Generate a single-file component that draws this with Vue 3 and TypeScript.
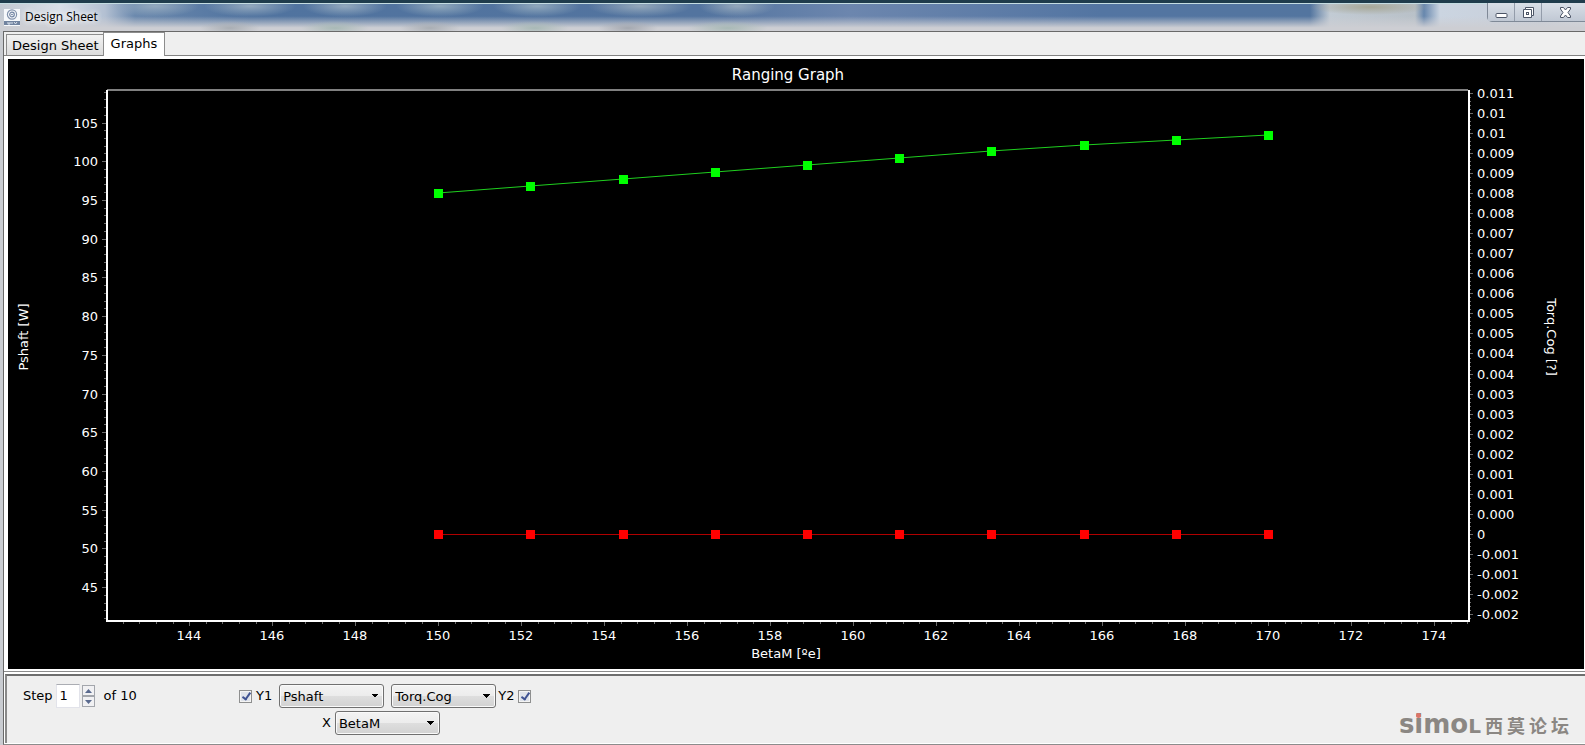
<script setup lang="ts">
import { computed, onBeforeUnmount, onMounted, ref } from 'vue'

interface Tick {
  pos: number
  label: string
}

const chartBox = ref<HTMLElement | null>(null)
const width = ref(1576)
const height = ref(610)
let observer: ResizeObserver | undefined

onMounted(() => {
  observer = new ResizeObserver((entries) => {
    const box = entries[0].contentRect
    width.value = Math.round(box.width)
    height.value = Math.round(box.height)
  })
  if (chartBox.value) observer.observe(chartBox.value)
})
onBeforeUnmount(() => observer?.disconnect())

const margin = { left: 99, right: 116, top: 31, bottom: 49 }
const right = computed(() => width.value - margin.right)
const bottom = computed(() => height.value - margin.bottom)
const middleX = computed(() => Math.round((margin.left + right.value) / 2))
const middleY = computed(() => Math.round((margin.top + bottom.value) / 2) - 18)

const xRange = [142.02, 174.82]
const yRange = [40.75, 109.2]
const y2Range = [-26.3, 0.15]

const scaleX = (v: number) =>
  Math.round(margin.left + ((v - xRange[0]) / (xRange[1] - xRange[0])) * (right.value - margin.left))
const scaleOn = (range: number[], v: number) =>
  Math.round(bottom.value - ((v - range[0]) / (range[1] - range[0])) * (bottom.value - margin.top))

const xTicks = computed<Tick[]>(() =>
  Array.from({ length: 16 }, (_, i) => ({ pos: scaleX(144 + i * 2), label: String(144 + i * 2) })),
)
const xMinor = computed(() => Array.from({ length: 82 }, (_, i) => scaleX(142.4 + i * 0.4)))

const yTicks = computed<Tick[]>(() =>
  Array.from({ length: 13 }, (_, i) => ({ pos: scaleOn(yRange, 105 - i * 5), label: String(105 - i * 5) })),
)
const yMinor = computed(() => Array.from({ length: 69 }, (_, i) => scaleOn(yRange, 41 + i)))

// The right axis is spaced in label steps, counted down from the top.
const y2Labels = [
  '0.011', '0.01', '0.01', '0.009', '0.009', '0.008', '0.008', '0.007', '0.007',
  '0.006', '0.006', '0.005', '0.005', '0.004', '0.004', '0.003', '0.003', '0.002',
  '0.002', '0.001', '0.001', '0.000', '0', '-0.001', '-0.001', '-0.002', '-0.002',
]
const y2Ticks = computed<Tick[]>(() => y2Labels.map((label, i) => ({ pos: scaleOn(y2Range, -i), label })))
const y2Minor = computed(() => Array.from({ length: 132 }, (_, i) => scaleOn(y2Range, -i / 5)))

const shaftPower = [95.9, 96.8, 97.7, 98.6, 99.5, 100.4, 101.3, 102.1, 102.75, 103.4]
const points = computed(() =>
  shaftPower.map((v, i) => ({ x: scaleX(150 + (i * 20) / 9), y: scaleOn(yRange, v) })),
)
const cogPoints = computed(() => points.value.map((p) => ({ x: p.x, y: scaleOn(y2Range, -22) })))
const toLine = (list: { x: number; y: number }[]) => list.map((p) => `${p.x},${p.y}`).join(' ')

const tab = ref('graphs')
const step = ref(1)
const showY1 = ref(true)
const showY2 = ref(true)
const y1Name = ref('Pshaft')
const y2Name = ref('Torq.Cog')
const xName = ref('BetaM')
const moveStep = (by: number) => {
  step.value = Math.min(10, Math.max(1, step.value + by))
}
</script>

<template>
  <div class="window">
    <header class="titlebar">
      <div class="glass" aria-hidden="true"></div>
      <svg class="app-icon" width="16" height="17" viewBox="0 0 16 17" aria-hidden="true">
        <rect width="16" height="17" fill="#f6f8fb" />
        <circle cx="8" cy="5.5" r="4.6" fill="none" stroke="#8393ad" stroke-width="1.2" />
        <circle cx="8" cy="5.5" r="2.3" fill="none" stroke="#7386a4" stroke-width="1.2" />
        <circle cx="8" cy="5.5" r="0.8" fill="#5e7396" />
        <rect y="12" width="16" height="4" fill="#71839f" />
        <path d="M4 13v2h2v-2M8 13v2M10 13l1.500 2 1.500-2" fill="none" stroke="#dfe6f0" />
      </svg>
      <h1>Design Sheet</h1>
      <div class="caption-buttons">
        <button type="button" class="cap" aria-label="Minimize">
          <svg width="13" height="15" viewBox="0 0 13 15">
            <rect x="1" y="8.500" width="11" height="4" rx="1" fill="#fff" stroke="#4c5566" />
          </svg>
        </button>
        <button type="button" class="cap" aria-label="Restore">
          <svg width="13" height="15" viewBox="0 0 13 15">
            <path d="M3.500 2.500h8v8h-2v2h-8v-8h2z" fill="#fff" stroke="#4c5566" />
            <path d="M3.500 4.500h6v6" fill="none" stroke="#4c5566" />
            <rect x="4.500" y="7.500" width="2" height="2" fill="#fff" stroke="#4c5566" />
          </svg>
        </button>
        <button type="button" class="cap close" aria-label="Close">
          <svg width="13" height="15" viewBox="0 0 13 15">
            <path
              d="M1.500 2.500h3l2 2.500 2-2.500h3v1.500l-2.500 3.500 2.500 3.500v1.500h-3l-2-2.500-2 2.500h-3v-1.500l2.500-3.500-2.500-3.500z"
              fill="#fff" stroke="#4c5566"
            />
          </svg>
        </button>
      </div>
    </header>

    <main class="client">
      <div class="tabs" role="tablist">
        <button type="button" role="tab" :aria-selected="tab === 'sheet'" :class="{ active: tab === 'sheet' }" @click="tab = 'sheet'">Design Sheet</button>
        <button type="button" role="tab" :aria-selected="tab === 'graphs'" :class="{ active: tab === 'graphs' }" @click="tab = 'graphs'">Graphs</button>
      </div>

      <section class="page">
        <div ref="chartBox" class="chart">
          <svg :width="width" :height="height" role="img" aria-label="Ranging Graph">
            <g class="ticks" shape-rendering="crispEdges">
              <line v-for="(p, i) in xMinor" :key="'xm' + i" :x1="p" :x2="p" :y1="bottom" :y2="bottom + 4" />
              <line v-for="t in xTicks" :key="'x' + t.label" :x1="t.pos" :x2="t.pos" :y1="bottom" :y2="bottom + 6" />
              <line v-for="(p, i) in yMinor" :key="'ym' + i" :x1="margin.left - 3" :x2="margin.left" :y1="p" :y2="p" />
              <line v-for="t in yTicks" :key="'y' + t.label" :x1="margin.left - 5" :x2="margin.left" :y1="t.pos" :y2="t.pos" />
              <line v-for="(p, i) in y2Minor" :key="'rm' + i" :x1="right" :x2="right + 3" :y1="p" :y2="p" />
              <line v-for="(t, i) in y2Ticks" :key="'r' + i" :x1="right" :x2="right + 5" :y1="t.pos" :y2="t.pos" />
            </g>
            <g shape-rendering="crispEdges" fill="none" stroke-width="2">
              <line :x1="margin.left" :x2="right" :y1="margin.top" :y2="margin.top" stroke="#808080" />
              <polyline
                :points="`${margin.left},${margin.top} ${margin.left},${bottom + 1} ${right + 1},${bottom + 1} ${right + 1},${margin.top}`"
                stroke="#fff"
              />
            </g>

            <text class="chart-title" :x="middleX" y="21" text-anchor="middle">Ranging Graph</text>
            <g class="labels">
              <text v-for="t in xTicks" :key="t.label" :x="t.pos" :y="bottom + 20" text-anchor="middle">{{ t.label }}</text>
              <text v-for="t in yTicks" :key="t.label" :x="margin.left - 9" :y="t.pos + 5" text-anchor="end">{{ t.label }}</text>
              <text v-for="(t, i) in y2Ticks" :key="i" :x="right + 9" :y="t.pos + 5">{{ t.label }}</text>
              <text :x="middleX - 2" :y="bottom + 38" text-anchor="middle">BetaM [ºe]</text>
              <text :transform="`translate(20 ${middleY}) rotate(-90)`" text-anchor="middle">Pshaft [W]</text>
              <text :transform="`translate(${width - 37} ${middleY}) rotate(90)`" text-anchor="middle">Torq.Cog [?]</text>
            </g>

            <polyline :points="toLine(points)" fill="none" stroke="#1fd01f" />
            <polyline :points="toLine(cogPoints)" fill="none" stroke="#b00000" shape-rendering="crispEdges" />
            <g fill="#00ff00">
              <rect v-for="(p, i) in points" :key="i" :x="p.x - 4" :y="p.y - 4" width="9" height="9" />
            </g>
            <g fill="#ff0000">
              <rect v-for="(p, i) in cogPoints" :key="i" :x="p.x - 4" :y="p.y - 4" width="9" height="9" />
            </g>
          </svg>
        </div>
      </section>

      <form class="controls" @submit.prevent>
        <div class="step">
          <label for="step">Step</label>
          <input id="step" v-model.number="step" type="text" />
          <span class="spin">
            <button type="button" aria-label="Next step" @click="moveStep(1)"><svg width="7" height="4"><path d="M0 4L3.500 0 7 4z" fill="#5a6a8e" /></svg></button>
            <button type="button" aria-label="Previous step" @click="moveStep(-1)"><svg width="7" height="4"><path d="M0 0h7L3.500 4z" fill="#5a6a8e" /></svg></button>
          </span>
          <span>of 10</span>
        </div>
        <div class="axes">
          <div class="row">
            <label class="tick">
              <input v-model="showY1" type="checkbox" />
              Y1
            </label>
            <select v-model="y1Name" aria-label="Y1 quantity"><option>Pshaft</option></select>
            <select v-model="y2Name" class="second" aria-label="Y2 quantity"><option>Torq.Cog</option></select>
            <label class="tick">
              Y2
              <input v-model="showY2" type="checkbox" />
            </label>
          </div>
          <div class="row x-row">
            <label for="x-name">X</label>
            <select id="x-name" v-model="xName"><option>BetaM</option></select>
          </div>
        </div>
        <div class="brand">
          <span class="latin">s<span class="dotted">i</span>mo<span class="cap-l">L</span></span>
          <span class="han"><span>西</span><span>莫</span><span>论</span><span>坛</span></span>
        </div>
      </form>
    </main>
  </div>
</template>

<style>
html,
body {
  margin: 0;
  background: #c9ccd1;
}
</style>

<style scoped>
.window {
  box-sizing: border-box;
  display: flex;
  flex-direction: column;
  height: 100vh;
  min-height: 400px;
  font-family: 'DejaVu Sans', Verdana, sans-serif;
  font-size: 13px;
  color: #000;
  overflow: hidden;
}

.titlebar {
  position: relative;
  box-sizing: border-box;
  display: flex;
  align-items: flex-start;
  height: 31px;
  flex: none;
  border-top: 3px solid #1f3c4c;
  background: #c9ced8;
  overflow: hidden;
}

.glass {
  position: absolute;
  inset: 0;
  border-top: 1px solid #c5dde2;
  background:
    radial-gradient(ellipse 30px 7px at 230px 24px, #a9aeb4, transparent),
    radial-gradient(ellipse 34px 7px at 335px 24px, #a8b9b6, transparent),
    radial-gradient(ellipse 30px 7px at 430px 24px, #a9aeb4, transparent),
    radial-gradient(ellipse 34px 7px at 535px 24px, #a8b9b6, transparent),
    radial-gradient(ellipse 30px 7px at 628px 24px, #a4a8b0, transparent),
    radial-gradient(ellipse 40px 7px at 728px 24px, #a8b9b6, transparent),
    linear-gradient(to bottom, transparent 45%, #cdced3 88%),
    radial-gradient(ellipse 44px 11px at 155px 2px, #93a9be, transparent),
    radial-gradient(ellipse 46px 11px at 250px 2px, #93a9be, transparent),
    radial-gradient(ellipse 42px 11px at 345px 2px, #93a9be, transparent),
    radial-gradient(ellipse 44px 11px at 440px 2px, #90a8bc, transparent),
    radial-gradient(ellipse 44px 11px at 537px 2px, #90a8bc, transparent),
    radial-gradient(ellipse 52px 11px at 640px 2px, #94a8bb, transparent),
    radial-gradient(ellipse 38px 11px at 737px 2px, #94a8bb, transparent),
    radial-gradient(ellipse 60px 8px at 1370px 3px, #a7a898, transparent),
    linear-gradient(to right, #c3c9d2 0, #d9dfe8 60px, #b3c0d2 105px, #6a88ad 135px, #50739f 250px, #53749f 700px, #6c86ae 850px, #5375a2 1100px, #53759f 1310px, #c2cbd4 1330px, #b9c1c8 1415px, #6787ad 1424px, #cbd5e1 1440px, #c8ced9 1540px, #d5d9df 1585px);
}

.app-icon {
  position: relative;
  margin: 6px 0 0 4px;
}

h1 {
  position: relative;
  margin: 5px 0 0 5px;
  font: 12px/17px 'Open Sans', 'Noto Sans', sans-serif;
  text-shadow: 0 0 6px #fff, 0 0 6px #fff;
}

.caption-buttons {
  position: relative;
  display: flex;
  margin-left: auto;
  border: 1px solid #7f8997;
  border-width: 0 0 1px 1px;
  border-radius: 0 0 0 5px;
  background: #ccd3de;
}

.cap {
  width: 27px;
  height: 18px;
  padding: 0;
  border: 0;
  border-right: 1px solid #939caa;
  background: linear-gradient(#d9dfe7, #c0c8d4);
  line-height: 0;
}

.cap.close {
  width: 43px;
  padding-left: 4px;
  border-right: 0;
}

.client {
  flex: 1;
  display: flex;
  flex-direction: column;
  min-height: 0;
  margin-left: 3px;
  border-top: 1px solid #696969;
  border-left: 1px solid #696969;
  border-bottom: 1px solid #8c8c8c;
  background: #fff;
}

.tabs {
  display: flex;
  align-items: flex-end;
  height: 24px;
  box-sizing: border-box;
  flex: none;
  padding-left: 2px;
  border-bottom: 1px solid #828282;
  background: #efefef;
}

.tabs button {
  box-sizing: border-box;
  height: 21px;
  padding: 0 4px 0 5px;
  border: 1px solid #8c8c8c;
  border-bottom: 0;
  background: linear-gradient(#f2f2f2, #dcdcdc);
  font: inherit;
  line-height: 22px;
  color: #000;
}

.tabs button.active {
  height: 24px;
  margin: 0 0 -1px -1px;
  padding: 0 7px 2px;
  background: #fff;
}

.page {
  flex: 1;
  display: flex;
  min-height: 0;
  padding: 3px 1px 2px 4px;
  border-bottom: 1px solid #8c8c8c;
}

.chart {
  flex: 1;
  min-width: 0;
  min-height: 0;
  overflow: hidden;
  background: #000;
}

.chart svg {
  display: block;
}

.ticks line {
  stroke: #6a6a6a;
}

.labels {
  fill: #fff;
  font-size: 13px;
}

.chart-title {
  fill: #fff;
  font-size: 15px;
}

.controls {
  flex: none;
  display: flex;
  align-items: flex-start;
  margin: 2px 0 1px 1px;
  padding: 8px 16px 7px 16px;
  border-top: 2px solid #6e6e6e;
  border-left: 2px solid #8a8a8a;
  background: #efefef;
  line-height: 24px;
}

.step {
  display: flex;
  align-items: center;
  width: 216px;
}

.step input {
  box-sizing: border-box;
  width: 24px;
  height: 24px;
  margin: 0 2px 0 3px;
  padding: 0 3px;
  border: 1px solid #e2e3ea;
  border-top-color: #abadb3;
  background: #fff;
  font: inherit;
}

.spin {
  display: flex;
  flex-direction: column;
  margin-right: 9px;
}

.spin button {
  display: flex;
  align-items: center;
  justify-content: center;
  box-sizing: border-box;
  width: 13px;
  height: 11px;
  padding: 0;
  border: 1px solid #a3a6ac;
  background: #f1f1f3;
}

.row {
  display: flex;
  align-items: center;
}

.x-row {
  margin-top: 3px;
  padding-left: 83px;
}

.x-row label {
  margin-right: 4px;
}

.tick {
  display: flex;
  align-items: center;
  gap: 4px;
  margin-right: 7px;
}

select + .tick {
  margin: 0 0 0 2px;
}

.tick input {
  appearance: none;
  box-sizing: border-box;
  width: 13px;
  height: 13px;
  margin: 0;
  border: 1px solid #8e8f8f;
  background: #dfe3ea;
  box-shadow: inset 0 0 0 1px #f4f4f4;
}

.tick input:checked::after {
  content: '';
  display: block;
  box-sizing: border-box;
  width: 5px;
  height: 9px;
  margin: 0 0 0 4px;
  border: solid #3f5292;
  border-width: 0 2px 2px 0;
  transform: rotate(35deg);
}

select {
  appearance: none;
  box-sizing: border-box;
  width: 105px;
  height: 24px;
  padding: 0 16px 0 3px;
  border: 1px solid #707070;
  border-radius: 3px;
  background:
    linear-gradient(to bottom left, #000 50%, transparent 50%) right 8px center / 4px 4px no-repeat,
    linear-gradient(to bottom right, #000 50%, transparent 50%) right 4px center / 4px 4px no-repeat,
    linear-gradient(#f3f3f3, #ececec 50%, #dedede 50%, #d2d2d2);
  box-shadow: inset 0 0 0 1px #fafafa;
  font: inherit;
  color: #000;
}

select.second {
  margin-left: 7px;
}

.brand {
  display: flex;
  align-items: baseline;
  gap: 4px;
  margin: 0 0 0 auto;
  padding-top: 30px;
  line-height: 20px;
  color: #8b8783;
}

.latin {
  font-size: 26px;
  font-weight: bold;
}

.dotted {
  position: relative;
}

.dotted::after {
  content: '';
  position: absolute;
  left: 2px;
  top: 4px;
  width: 5px;
  height: 5px;
  border-radius: 50%;
  background: #dc7468;
}

.cap-l {
  font-size: 20px;
}

.han {
  display: flex;
  gap: 4px;
  font-family: 'Noto Sans CJK SC', sans-serif;
  font-size: 18px;
  font-weight: bold;
}
</style>
